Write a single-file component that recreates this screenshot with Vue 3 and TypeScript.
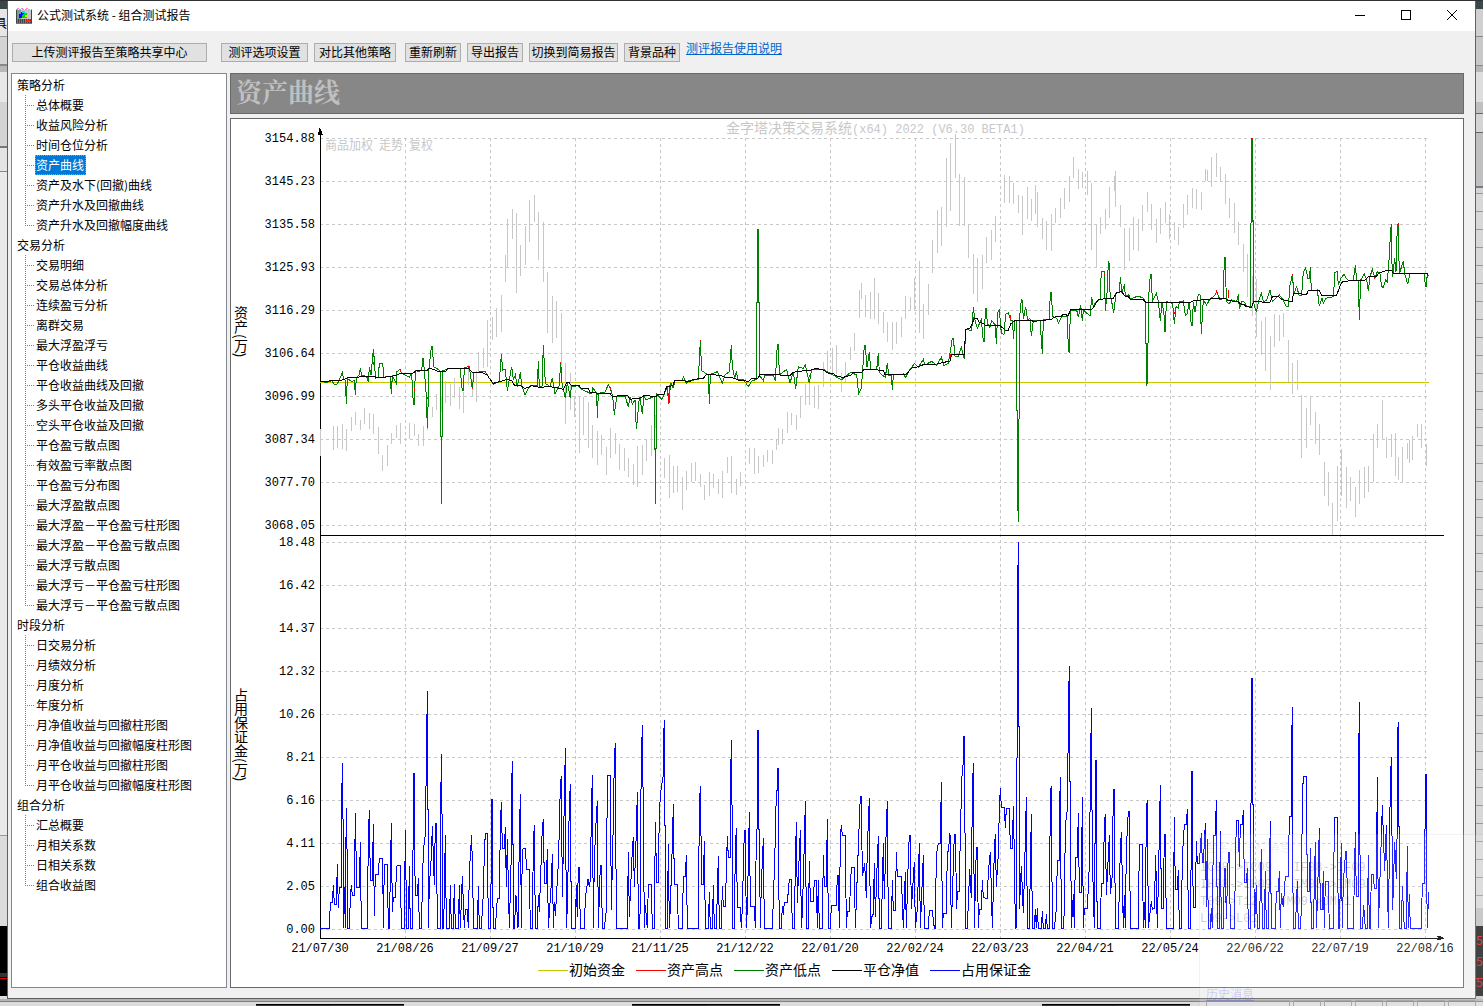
<script setup lang="ts">
interface TreeGroup {
  title: string
  items: string[]
}

interface Segment {
  origin: number
  end: number
  data: string
}

const groups: TreeGroup[] = [
  {
    title: '策略分析',
    items: ['总体概要', '收益风险分析', '时间仓位分析', '资产曲线', '资产及水下(回撤)曲线', '资产升水及回撤曲线', '资产升水及回撤幅度曲线'],
  },
  {
    title: '交易分析',
    items: [
      '交易明细', '交易总体分析', '连续盈亏分析', '离群交易', '最大浮盈浮亏', '平仓收益曲线', '平仓收益曲线及回撤',
      '多头平仓收益及回撤', '空头平仓收益及回撤', '平仓盈亏散点图', '有效盈亏率散点图', '平仓盈亏分布图', '最大浮盈散点图',
      '最大浮盈－平仓盈亏柱形图', '最大浮盈－平仓盈亏散点图', '最大浮亏散点图', '最大浮亏－平仓盈亏柱形图', '最大浮亏－平仓盈亏散点图',
    ],
  },
  {
    title: '时段分析',
    items: ['日交易分析', '月绩效分析', '月度分析', '年度分析', '月净值收益与回撤柱形图', '月净值收益与回撤幅度柱形图', '月平仓收益与回撤柱形图', '月平仓收益与回撤幅度柱形图'],
  },
  {
    title: '组合分析',
    items: ['汇总概要', '月相关系数', '日相关系数', '组合收益图'],
  },
]
const selected = '资产曲线'

const assetTicks = ['3154.88', '3145.23', '3135.58', '3125.93', '3116.29', '3106.64', '3096.99', '3087.34', '3077.70', '3068.05']
const marginTicks = ['18.48', '16.42', '14.37', '12.32', '10.26', '8.21', '6.16', '4.11', '2.05', '0.00']
const dates = [
  '21/07/30', '21/08/26', '21/09/27', '21/10/29', '21/11/25', '21/12/22', '22/01/20',
  '22/02/24', '22/03/23', '22/04/21', '22/05/24', '22/06/22', '22/07/19', '22/08/16',
]
const legend = [
  { label: '初始资金', color: '#c8c800' },
  { label: '资产高点', color: '#ff0000' },
  { label: '资产低点', color: '#008000' },
  { label: '平仓净值', color: '#000000' },
  { label: '占用保证金', color: '#0000ff' },
]

const LEFT = 231
const TOP = 119
const ASSET_TOP = 120
const MARGIN_TOP = 540
const STEP = 3

/* Series are stored in three spans, in units of a third of a chart unit. */
const net: Segment[] = [
  { origin: 230, end: 1230, data: '271,785 295,785 300,780 335,780 350,775 355,772 372,774 395,769 430,769 440,772 460,772 485,769 500,765 512,760 548,760 560,752 590,752 598,745 610,748 620,753 648,753 652,745 715,745 728,757 760,759 772,766 778,775 790,790 815,783 830,778 845,782 853,795 870,797 885,805 900,800 905,797 935,803 950,799 975,802 1000,808 1010,788 1018,788 1024,797 1047,797 1053,804 1075,806 1080,816 1105,820 1140,820 1148,831 1170,826 1193,826 1200,838' },
  { origin: 640, end: 1200, data: '0,834 12,827 48,829 55,822 72,822 80,800 98,797 105,781 150,784 160,778 190,775 200,763 240,766 255,772 280,774 295,780 325,784 335,776 355,774 360,763 450,766 460,757 475,754 510,751 530,745 550,750 565,760 580,761 592,769 610,772 632,766 640,757 665,757 670,750 700,748 730,752 735,764 800,762 815,744 835,740 850,734 890,732 930,723 935,702 973,702 977,628 990,625 1003,596 1012,596 1018,607 1030,610 1036,616 1080,617 1095,630 1105,630 1112,612 1125,602 1170,600 1180,604' },
  { origin: 1040, end: 9999, data: '0,602 35,598 40,592 65,588 68,583 85,586 92,568 155,569 165,555 175,538 220,535 230,518 245,515 255,528 265,530 270,537 310,540 318,547 450,548 460,543 490,539 520,536 555,535 565,542 595,545 602,552 612,554 618,560 635,562 640,545 690,547 697,530 715,530 725,538 745,543 757,543 760,520 800,523 805,510 838,510 845,528 890,526 900,498 908,484 975,480 985,470 1010,468 1018,458 1040,452 1055,452 1060,460 1163,460 1163,466' },
]

const low: Segment[] = [
  { origin: 230, end: 1230, data: '271,785 290,787 305,782 312,792 320,795 328,780 337,757 341,778 346,780 349,851 352,775 365,785 373,782 376,824 379,772 388,765 391,745 395,766 410,769 415,785 418,742 423,765 430,688 434,730 436,775 445,770 448,730 458,730 462,772 480,768 484,821 487,768 499,790 500,755 511,748 514,760 538,772 545,760 550,852 553,852 556,750 565,755 575,750 579,715 583,750 589,830 592,923 595,830 597,745 604,680 607,680 611,740 620,745 631,753 631,950 634,951 634,1151 634,951 637,950 637,753 655,747 690,745 697,812 700,812 703,742 718,740 727,808 732,757 766,755 775,770 790,793 808,785 814,703 818,750 826,748 832,812 845,740 850,780 856,765 862,800 871,757 875,797 885,824 900,797 922,798 925,724 928,800 936,800 940,676 946,790 960,800 967,775 975,822 988,797 992,725 996,790 1006,835 1012,788 1021,835 1024,800 1045,797 1055,808 1070,815 1085,822 1088,803 1100,820 1102,893 1105,820 1125,817 1135,793 1142,808 1148,828 1153,884 1160,830 1185,828 1195,860 1200,830 1207,852 1215,840 1219,926 1222,900 1228,832' },
  { origin: 640, end: 1200, data: '0,834 7,881 12,827 18,840 43,829 43,988 46,990 46,1151 46,985 49,985 50,822 66,838 73,822 82,800 86,853 92,788 99,805 105,783 128,780 130,770 139,790 145,783 175,778 181,662 185,752 205,765 208,851 211,763 232,755 247,790 255,765 268,755 274,676 277,740 284,775 289,757 295,780 310,778 325,800 335,783 349,778 349,550 352,546 352,328 355,328 355,546 358,548 358,766 370,782 375,765 400,765 406,782 412,673 415,673 418,765 440,748 450,788 460,757 467,806 475,740 490,745 496,735 508,790 515,748 550,748 580,765 604,780 632,757 650,765 656,821 664,806 673,677 676,677 681,742 688,697 692,748 710,750 715,700 718,758 736,772 742,730 746,765 754,765 757,809 760,765 790,762 797,772 805,755 824,730 835,742 850,718 855,735 875,724 890,735 904,712 912,737 925,730 937,655 940,655 945,708 955,710 964,682 973,718 977,628 995,632 1000,562 1005,600 1012,625 1024,598 1030,665 1033,665 1036,566 1039,566 1042,610 1050,622 1055,602 1066,615 1069,671 1073,578 1078,570 1084,640 1092,643 1097,582 1105,578 1112,600 1118,600 1120,656 1125,600 1129,602 1129,870 1132,872 1132,1170 1135,1172 1135,1205 1135,898 1138,896 1138,602 1144,538 1147,540 1150,598 1157,560 1163,600 1170,595 1174,647 1180,602' },
  { origin: 1040, end: 9999, data: '0,602 7,701 10,600 28,597 31,517 34,517 38,590 50,595 55,610 65,590 82,588 85,690 88,698 91,570 110,570 115,592 122,555 127,604 130,570 150,588 155,532 160,560 168,545 180,537 184,455 193,455 196,572 202,510 205,424 208,430 210,515 221,580 228,520 238,515 241,472 246,520 253,493 256,528 265,525 270,537 295,528 310,535 316,545 316,670 319,672 319,797 322,790 322,672 325,668 325,545 331,463 334,463 337,545 349,520 355,545 361,604 366,545 373,590 373,634 376,634 379,545 398,550 403,613 408,560 415,565 418,545 430,543 436,587 442,580 448,545 454,616 457,616 460,545 465,575 475,523 480,523 484,641 490,540 500,555 508,540 525,525 530,515 540,540 550,535 553,412 556,412 559,545 567,552 575,540 590,545 595,523 598,566 605,545 612,545 622,560 631,560 631,310 634,308 634,57 637,57 637,303 640,305 640,545 649,577 655,547 664,520 670,545 680,540 690,511 697,545 718,525 730,540 738,559 745,559 750,495 757,465 762,520 770,500 777,525 785,525 790,455 797,445 804,475 808,475 811,442 814,512 832,510 838,559 846,535 850,551 858,535 880,530 885,457 892,455 895,495 903,475 912,463 918,475 925,480 940,480 946,436 950,480 955,480 958,600 962,480 973,462 980,480 985,512 990,470 997,448 1005,475 1012,455 1020,462 1025,500 1030,502 1037,480 1042,485 1049,395 1051,340 1054,313 1054,390 1058,470 1064,415 1068,455 1072,315 1075,311 1075,385 1079,458 1090,424 1094,460 1103,493 1110,460 1153,460 1156,500 1159,500 1162,460 1165,467' },
]

const margin: Segment[] = [
  { origin: 230, end: 1230, data: '271,1165 298,1165 301,1087 307,1087 310,1036 313,1093 319,1093 322,972 325,1103 328,1042 334,1042 334,855 337,670 340,918 341,1165 344,1042 347,1165 347,985 349,804 352,985 353,1165 358,1165 361,1075 364,1036 367,1066 373,1066 376,820 380,1042 388,1042 391,906 394,1165 412,1165 415,890 418,811 421,1021 427,1021 430,853 433,1127 436,1003 445,1003 448,955 458,955 460,1165 463,973 472,973 475,1165 478,1165 484,850 487,1117 490,1073 496,1073 500,980 503,976 511,976 514,1165 523,1165 526,870 530,1165 535,1165 538,979 541,1165 547,1165 547,932 550,930 550,700 553,700 553,885 556,1066 562,1066 565,1015 568,1165 574,1165 580,930 586,885 586,740 589,738 589,525 592,523 592,454 592,808 595,810 595,1165 598,1036 604,950 607,858 613,1036 616,850 619,850 622,1165 631,1165 631,905 634,643 637,905 638,1165 641,1165 646,886 649,1165 658,1165 661,1036 664,1165 670,1165 673,1033 676,1165 685,1165 688,1036 691,1165 697,1008 703,1165 706,1108 712,1108 715,1165 718,995 725,884 728,1025 731,1165 742,1165 745,1039 748,1165 754,1165 760,1060 763,940 766,880 772,880 775,1165 781,1165 784,970 784,778 787,778 787,970 790,1165 796,1165 802,1075 808,1075 811,860 814,787 817,925 823,925 826,861 829,1042 832,897 838,1165 844,940 844,700 847,698 847,664 847,912 850,915 850,1165 853,1165 858,1066 864,1165 868,902 871,763 874,1165 877,928 886,925 890,988 898,988 901,1165 907,1165 910,915 913,855 916,1165 922,1165 925,1066 928,1117 937,862 940,838 943,1030 949,1030 952,928 955,1165 964,1030 967,942 970,1165 973,1087 976,1127 985,970 988,868 991,735 994,709 997,1070 1003,780 1006,625 1009,1165 1012,1100 1018,795 1021,732 1024,1165 1036,1165 1039,1036 1042,1130 1045,982 1048,982 1051,1165 1063,1165 1066,1073 1074,1018 1078,1040 1081,1020 1084,828 1087,706 1090,1165 1093,960 1099,828 1102,784 1105,1165 1111,976 1114,976 1117,1165 1123,1165 1129,1110 1132,706 1141,706 1144,1110 1150,840 1153,655 1156,610 1159,1165 1192,1165 1195,937 1198,1130 1207,928 1210,892 1213,1040 1219,875 1222,757 1225,1165 1228,1165' },
  { origin: 640, end: 1200, data: '1,1100 1,912 4,670 7,556 10,828 13,1165 16,1096 22,1165 25,1034 34,1034 37,1165 43,1165 46,847 50,1027 55,1027 58,811 64,740 70,705 70,610 73,541 73,855 76,857 76,1165 82,1165 85,912 88,1165 91,1100 97,912 100,793 103,1033 112,1033 115,1165 127,1165 130,1009 136,1009 139,946 142,1165 175,1165 178,805 181,739 185,1033 190,1033 193,904 196,1165 205,1165 208,1057 211,1165 217,1165 220,1036 223,1165 229,1165 235,949 238,1165 244,1165 247,1039 250,1099 256,1099 262,888 265,952 271,952 271,778 274,601 277,885 277,1165 283,1165 286,928 289,865 292,1102 301,1102 304,1165 307,1102 313,871 316,871 319,1165 322,1105 328,817 331,1099 343,1099 346,1165 349,868 352,866 352,571 355,571 355,868 358,870 361,1165 364,1033 370,895 373,1165 397,1165 403,993 406,893 409,753 412,750 412,685 415,685 415,900 418,1165 424,1165 427,1099 430,1125 433,1087 442,1087 448,1018 454,1018 457,1165 463,1165 466,978 469,847 472,1088 478,940 481,871 484,1165 487,1117 493,910 496,784 499,1165 505,1165 508,962 511,1084 520,1084 523,1021 529,1021 532,1165 535,1021 538,1165 547,1165 550,946 553,1039 559,1039 562,838 565,1165 571,1165 574,1096 589,1096 592,1006 595,1006 598,1165 601,893 604,856 607,886 616,886 619,1165 622,1115 628,1115 634,982 643,982 646,1165 655,920 658,843 661,769 664,769 667,1009 674,970 679,1073 682,923 688,775 691,1165 697,1123 700,1123 703,970 706,1130 712,957 715,889 718,1165 724,1165 730,910 733,1078 739,855 742,784 745,1165 754,1165 757,1021 760,1111 766,1111 769,937 772,1009 784,1009 790,1165 796,997 799,1165 805,952 808,886 811,886 814,1108 823,967 826,1165 832,1108 838,910 841,1165 850,946 853,1165 865,1165 868,1111 877,1111 883,1165 886,1165 889,946 895,910 901,910 904,727 907,1165 910,1120 919,1120 922,934 925,934 930,880 934,1165 943,883 946,883 950,1108 952,1054 958,1054 961,875 967,676 970,674 970,589 973,589 973,878 976,880 976,1165 982,1165 989,988 994,1075 997,763 1000,670 1003,1165 1009,922 1012,922 1015,1165 1018,1108 1024,1108 1027,1021 1030,1073 1042,1075 1045,993 1051,937 1057,1165 1063,930 1066,883 1069,1040 1075,940 1078,808 1081,745 1084,802 1093,802 1096,863 1099,805 1108,805 1111,925 1117,925 1120,799 1123,942 1126,1165 1129,1163 1129,655 1132,653 1132,76 1135,74 1135,7 1135,558 1138,560 1138,1108 1144,979 1150,1120 1156,900 1159,772 1162,1165 1168,1165 1174,823 1177,1165 1183,1165 1186,1108 1189,1165 1192,1105 1195,1165' },
  { origin: 1040, end: 9999, data: '0,1165 4,1165 7,1114 10,1165 16,1165 19,1123 22,1165 28,1165 31,760 34,739 37,1165 43,1165 49,1108 52,962 58,962 58,838 61,712 64,1165 70,1165 73,1111 76,858 82,808 82,640 85,638 85,424 88,422 88,379 88,724 91,726 94,1165 100,1063 103,1165 106,952 112,952 115,820 118,1057 124,1057 127,772 130,1165 133,1105 142,1105 148,976 151,740 154,505 157,955 163,1165 163,912 166,910 166,661 169,661 169,912 172,1165 181,1165 184,1030 190,1030 193,850 196,823 199,1066 208,886 211,1063 217,1005 220,748 223,748 226,1165 235,1165 241,930 244,877 250,1165 253,1066 256,1165 259,928 265,814 268,814 271,1165 295,1165 298,912 307,912 310,1165 313,1087 316,1165 319,811 322,781 325,1165 334,1084 337,1108 343,1105 347,946 352,1165 358,885 361,736 364,1105 370,1105 373,883 376,883 379,1165 400,1165 403,832 406,1048 412,1048 415,990 418,1165 424,1165 427,950 433,853 439,853 442,808 445,1165 451,1165 454,910 454,694 457,694 457,900 460,1102 466,1102 469,904 472,970 478,970 484,880 487,967 490,967 496,850 499,1100 502,897 505,1165 511,1165 514,1103 517,1165 520,886 526,886 529,781 532,1165 538,1165 541,874 544,1165 550,1165 553,985 556,985 559,1138 565,937 568,937 571,1165 583,1165 586,1000 589,841 595,841 598,980 601,853 607,853 610,811 613,1027 619,1027 622,985 625,1165 631,1165 631,790 634,788 634,415 637,415 637,790 640,795 643,1165 649,1036 652,1165 658,1165 664,928 667,1165 673,1165 676,994 679,1165 685,1165 691,844 694,1165 706,1165 709,1054 715,1054 718,994 721,1165 724,1060 730,1100 736,1009 745,1009 748,829 754,829 754,667 757,502 757,830 760,1165 766,1165 772,1024 775,1165 781,1165 784,1110 787,774 790,710 799,710 802,1054 808,1054 811,925 814,1165 820,1165 826,907 829,1165 832,1087 838,865 841,1108 847,1108 850,994 853,1165 856,1024 865,1024 868,1165 880,1165 883,832 892,832 895,1165 898,1165 904,910 907,1165 910,1027 917,934 920,934 923,1165 940,1165 946,877 949,1070 955,1070 955,778 958,487 961,1165 967,1165 971,1096 976,1165 982,1165 985,946 988,1165 991,1165 994,1003 1000,1003 1003,1045 1009,1045 1012,712 1015,1165 1024,892 1027,796 1034,994 1039,855 1045,1165 1051,733 1054,652 1058,1111 1064,907 1069,1018 1072,840 1072,588 1075,547 1075,858 1078,860 1078,1165 1084,1165 1087,1039 1093,1165 1099,1165 1102,919 1105,1165 1108,1063 1111,1165 1144,1165 1147,1030 1153,1030 1153,868 1156,866 1156,703 1159,703 1159,935 1162,1165 1165,1057 1165,1108' },
]

/* Ranges are x,top,bottom: the background instrument and the intraday highs. */
const backdrop: Segment[] = [
  { origin: 230, end: 1230, data: '271,927,1007 310,918,989 322,918,983 337,912,986 349,927,992 364,891,932 376,876,914 391,900,929 403,864,911 418,879,926 430,881,941 445,921,1001 457,1005,1052 472,975,1037 484,939,971 499,915,953 511,909,971 538,909,956 553,912,947 565,942,977 580,918,977 592,850,929 607,861,890 619,822,870 634,830,875 646,783,848 661,793,857 673,774,833 688,800,866 700,815,878 715,735,794 727,780,830 739,752,845 745,696,755 760,684,745 772,600,740 787,591,661 799,564,650 814,525,635 826,405,486 832,297,440 847,267,356 859,279,518 871,375,467 886,318,434 898,240,365 913,225,305 925,276,419 940,306,485 952,456,638 967,528,668 979,543,653 994,579,735 1006,729,911 1021,759,869 1033,828,892 1048,830,998 1060,830,944 1075,846,983 1087,915,1013 1102,933,1034 1114,945,1004 1129,981,1064 1141,924,1013 1156,939,1001 1168,972,1049 1183,984,1052 1195,1014,1070 1210,1032,1094 1222,978,1100' },
  { origin: 640, end: 1200, data: '7,975,1064 19,957,1022 34,915,1007 46,885,925 73,1014,1073 88,1005,1133 100,1038,1118 112,1038,1115 127,1071,1169 139,1053,1109 154,1029,1085 166,1026,1082 181,1062,1100 193,1095,1139 208,1056,1127 220,1062,1103 235,1077,1121 247,1053,1133 262,1011,1058 274,1008,1118 289,1077,1124 301,1056,1097 328,984,1031 343,984,1061 355,1008,1058 370,1005,1040 382,990,1025 397,990,1031 409,957,990 415,924,974 427,927,971 442,876,938 454,879,914 469,885,929 481,830,893 496,792,854 508,790,854 523,798,863 535,795,866 550,726,800 562,693,760 577,684,760 589,675,763 604,760,815 616,726,785 631,681,720 643,639,692 658,510,593 664,489,536 676,525,590 691,516,596 703,474,596 715,519,611 730,576,638 742,606,665 757,606,689 769,606,671 784,591,650 796,528,596 811,531,570 823,474,572 838,423,638 850,552,656 865,492,584 877,360,458 892,270,398 904,261,377 919,114,320 931,69,272 946,42,173 958,162,317 973,171,317 985,312,413 1000,402,521 1012,414,545 1027,405,506 1039,351,428 1054,330,419 1066,288,365 1093,165,248 1108,168,248 1120,189,251 1135,225,278 1147,228,344 1162,201,296 1174,237,302 1186,195,281 1192,216,320' },
  { origin: 1040, end: 9999, data: '7,294,356 19,303,389 34,282,392 46,264,308 61,234,293 73,204,266 88,168,245 100,111,173 115,147,206 127,156,203 142,153,224 154,189,389 169,312,443 181,291,341 196,267,326 208,201,293 223,168,212 226,153,261 241,255,320 253,324,449 268,324,422 280,291,389 295,297,392 307,255,332 322,216,275 334,252,329 349,297,368 361,264,341 376,246,308 388,282,356 403,306,359 415,321,374 430,252,323 442,225,284 457,204,263 469,207,266 484,216,269 496,147,184 502,150,184 514,111,200 529,99,170 541,141,185 556,162,251 568,234,293 583,249,338 595,306,374 610,372,455 622,402,530 637,468,587 649,477,650 664,603,704 676,591,752 691,648,809 703,582,680 718,585,662 730,579,650 745,660,785 757,729,821 772,720,809 784,825,1013 799,864,983 811,828,914 826,876,973 838,912,1004 853,1026,1127 865,1056,1157 877,1149,1246 892,1038,1202 904,987,1127 919,1041,1163 931,1071,1142 946,1101,1190 958,1050,1151 973,1041,1133 985,1038,1115 1000,942,1085 1012,912,983 1027,840,958 1039,951,1013 1054,942,1010 1066,939,1067 1075,1011,1079 1087,981,1087 1102,969,1016 1108,960,1028 1117,948,1019 1132,912,950 1144,912,983 1159,972,1037' },
]

const high: Segment[] = [
  { origin: 230, end: 1230, data: '430,688,697 430,725,735 418,742,750 511,748,752 715,738,744 814,703,708 940,676,684 992,725,732 553,800,815 592,830,838 727,800,806 1141,800,806 1102,820,826' },
  { origin: 640, end: 1200, data: '85,820,853 88,796,850 181,660,667 274,676,682 274,712,720 130,768,775 413,672,677 508,766,772 1000,590,598 1078,568,574 1112,585,597 1132,870,874 930,703,718' },
  { origin: 1040, end: 9999, data: '634,54,58 637,54,58 640,300,306 88,674,680 193,460,466 565,510,535 529,510,518 757,462,468 797,442,448 1075,308,314 1090,424,432 403,575,583 220,570,576 1003,465,478 803,470,478 454,608,616 268,525,537' },
]

function points(segments: Segment[]): number[][] {
  return segments.flatMap((s) =>
    s.data
      .split(' ')
      .map((p) => p.split(',').map(Number))
      .filter(([x]) => x < s.end)
      .map(([x, ...ys]) => [(s.origin - LEFT) * STEP + x, ...ys]),
  )
}

function toLine(segments: Segment[], top: number): string {
  return points(segments).map(([x, y]) => `${x},${(top - TOP) * STEP + y}`).join(' ')
}

function toBars(segments: Segment[], top: number): string {
  const shift = (top - TOP) * STEP
  return points(segments).map(([x, a, b]) => `M${x} ${shift + a}V${shift + b}`).join('')
}

const netPoints = toLine(net, ASSET_TOP)
const lowPoints = toLine(low, ASSET_TOP)
const marginPoints = toLine(margin, MARGIN_TOP)
const backdropPath = toBars(backdrop, ASSET_TOP)
const highPath = toBars(high, ASSET_TOP)
</script>

<template>
  <div class="desktop">
    <div class="middle">
      <div class="edge edge-left"><span>具</span></div>
      <main class="window">
        <header class="titlebar">
          <svg class="app-icon" width="16" height="16" viewBox="0 0 16 16" shape-rendering="crispEdges" aria-hidden="true">
            <path d="M0 1h16M1 0h2M5 0h3M10 0h2" stroke="#ff7df0" stroke-dasharray="2 1" />
            <rect y="2" width="16" height="13" fill="#444" />
            <rect x="1" y="2" width="14" height="9" fill="#c8c8c8" />
            <rect x="1" y="2" width="4" height="9" fill="#7b9a9a" />
            <path d="M5 4h4v6H3V6h2z" fill="#0010ff" />
            <path d="M8 5h3v5H6V8z" fill="#00d800" />
            <path d="M6 3h3v2H6z" fill="#00dcff" />
            <path d="M9 7h2v2H9z" fill="#f8f000" />
            <path d="M1 12h14M1 14h14" stroke="#ff20d0" stroke-width="2" stroke-dasharray="1 1" />
            <path d="M10 12h5v2h-5z" fill="#ff2020" />
            <path d="M0 15h16" stroke="#777" />
          </svg>
          <h1>公式测试系统 - 组合测试报告</h1>
          <div class="controls">
            <button type="button" aria-label="最小化">
              <svg width="12" height="12" viewBox="0 0 12 12" shape-rendering="crispEdges"><rect x="1" y="6" width="10" height="1" /></svg>
            </button>
            <button type="button" aria-label="最大化">
              <svg width="12" height="12" viewBox="0 0 12 12" shape-rendering="crispEdges"><path fill-rule="evenodd" d="M1 1h10v10H1zM2 2v8h8V2z" /></svg>
            </button>
            <button type="button" aria-label="关闭">
              <svg width="12" height="12" viewBox="0 0 12 12"><path d="M1 1l10 10M11 1L1 11" stroke="#000" /></svg>
            </button>
          </div>
        </header>

        <nav class="toolbar" aria-label="工具栏">
          <button type="button" class="upload">上传测评报告至策略共享中心</button>
          <button type="button" class="wide">测评选项设置</button>
          <button type="button" class="medium">对比其他策略</button>
          <button type="button" class="small first">重新刷新</button>
          <button type="button" class="small">导出报告</button>
          <button type="button" class="wide">切换到简易报告</button>
          <button type="button" class="small">背景品种</button>
          <a href="#help">测评报告使用说明</a>
        </nav>

        <div class="content">
          <aside class="tree">
            <section v-for="g in groups" :key="g.title">
              <h2>{{ g.title }}</h2>
              <ul>
                <li v-for="item in g.items" :key="item">
                  <a :href="'#' + item" :class="{ selected: item === selected }">{{ item }}</a>
                </li>
              </ul>
            </section>
          </aside>

          <div class="report">
            <h2 class="heading">资产曲线</h2>
            <div class="panel">
              <svg class="chart" viewBox="231 119 1232 868" role="img" aria-label="资产曲线">
                <g class="lines">
                  <g class="grid">
                    <line v-for="(_, i) in assetTicks" :key="'a' + i" x1="320" x2="1427" :y1="138 + i * 43" :y2="138 + i * 43" />
                    <line v-for="(_, i) in marginTicks" :key="'m' + i" x1="320" x2="1427" :y1="542 + i * 43" :y2="542 + i * 43" />
                    <line v-for="i in 13" :key="'v' + i" :x1="320 + i * 85" :x2="320 + i * 85" y1="138" y2="938" />
                  </g>
                  <path d="M320 938V130M320 535H1444M320 938H1444" stroke="#000" />
                  <path d="M320 127l1 3 2 5h-5l1-5z M1444 938l-4 -2h-4l2 2l-2 2h4z" fill="#000" />
                  <path d="M320 382H1429" stroke="#c8c800" />
                  <svg x="231" y="119" width="1232" height="868" viewBox="0 0 3696 2604" stroke-width="3">
                    <path :d="backdropPath" stroke="#c8c8c8" />
                    <polyline :points="lowPoints" stroke="#008000" />
                    <path :d="highPath" stroke="#ff0000" />
                    <polyline :points="netPoints" stroke="#000" />
                    <polyline :points="marginPoints" stroke="#0000ff" />
                  </svg>
                </g>

                <g class="ticks" text-anchor="end">
                  <text v-for="(t, i) in assetTicks" :key="t" x="315" :y="142 + i * 43">{{ t }}</text>
                  <text v-for="(t, i) in marginTicks" :key="t" x="315" :y="546 + i * 43">{{ t }}</text>
                </g>
                <g class="ticks" text-anchor="middle">
                  <text v-for="(d, i) in dates" :key="d" :x="320 + i * 85" y="952">{{ d }}</text>
                </g>

                <text class="watermark" x="726" y="133">金字塔决策交易系统<tspan class="latin">(x64) 2022 (V6.30 BETA1)</tspan></text>
                <text class="instrument" x="325" y="150">商品加权<tspan x="379">走势</tspan><tspan x="409">复权</tspan></text>

                <text class="vertical" x="241" y="306">资产(万)</text>
                <text class="vertical" x="241" y="688">占用保证金(万)</text>

                <g v-for="(l, i) in legend" :key="l.label" class="legend">
                  <line :x1="538 + i * 98" :x2="568 + i * 98" y1="970" y2="970" :stroke="l.color" />
                  <text :x="569 + i * 98" y="975">{{ l.label }}</text>
                </g>
              </svg>
            </div>
          </div>
        </div>
      </main>
      <div class="edge edge-right"><span>5</span><span>5</span><span>5</span></div>
    </div>
    <footer class="statusbar">
      <i class="meter"></i><i class="meter"></i><i class="meter"></i>
      <i class="cell wide-cell"></i><i class="cell"></i><i class="cell"></i><i class="cell"></i><i class="cell"></i><i class="cell"></i><i class="cell"></i>
    </footer>

    <div class="toast">
      <strong>金字塔 除权消息</strong>
      <pre>IC08-&gt;IC09   IF08-&gt;IF09
IH08-&gt;IH09   IM08-&gt;IM09
T09-&gt;T12   JM09-&gt;JM01
L09-&gt;L01</pre>
      <a href="#history">历史消息</a>
    </div>
  </div>
</template>

<style>
body {
  margin: 0;
}
</style>

<style scoped>
.desktop {
  position: relative;
  display: flex;
  flex-direction: column;
  min-height: 100vh;
  overflow: hidden;
  box-sizing: border-box;
  border-top: 1px solid #303234;
  background: #dcdcdc;
  color: #000;
  font: 12px/20px "Noto Sans CJK SC", sans-serif;
}

.middle {
  display: flex;
  flex: 1;
}

.edge {
  width: 7px;
  flex: none;
  overflow: hidden;
  font-size: 12px;
}

.edge-left {
  box-sizing: border-box;
  padding-top: 12px;
  background:
    linear-gradient(#3b464b 8px, #e6e6e6 8px 35px, #999 35px 36px, #d4d4d4 36px 63px, #888 63px 65px, #b8b8b8 65px 71px, #e8e8e8 71px 101px, #d4d4d4 101px 145px, #777 145px 147px, #e4e4e4 147px 170px, #888 170px 171px, #eaeaea 171px 834px, #999 834px 835px, #dcdcdc 835px 925px, #000 925px 972px, #333 972px 976px, #000 976px 977px, #d00 977px 978px, #000 978px 995px, #ddd 995px);
}

.edge-left span {
  display: block;
  margin-left: -5px;
}

.edge-right {
  display: flex;
  flex-direction: column;
  gap: 1px;
  box-sizing: border-box;
  padding-top: 929px;
  background:
    linear-gradient(#3b464b 8px, transparent 8px 925px, #222 925px 977px, #d02020 977px 978px, #222 978px 995px, #ccc 995px),
    linear-gradient(#d0d0d0 35px, #888 35px 36px, #c8c8c8 36px 64px, #888 64px 65px, #b8b8b8 65px 71px, #dedede 71px 101px, #c0c0c0 101px 112px, #666 112px 113px, #d4d4d4 113px 131px, #666 131px 132px, #c0c0c0 132px 185px, #778 185px 187px, #d4d4d4 187px 192px, transparent 192px 907px, #c0c0c0 907px),
    repeating-linear-gradient(#d8d8d8 0 12px, #999 12px 13px, #d8d8d8 13px 18px);
  color: #e02020;
}

.window {
  display: flex;
  flex: 1;
  flex-direction: column;
  min-width: 0;
  border: 1px solid #606060;
  border-top: 0;
  background: #f0f0f0;
}

.titlebar {
  display: flex;
  align-items: center;
  height: 30px;
  padding-left: 8px;
  background: #fff;
}

.titlebar h1 {
  flex: 1;
  margin: 0 0 2px 5px;
  font-size: 12px;
  font-weight: 400;
}

.controls {
  display: flex;
}

.controls button {
  display: grid;
  place-items: center;
  width: 46px;
  height: 30px;
  padding: 0 0 2px;
  border: 0;
  background: none;
}

.toolbar {
  display: flex;
  align-items: flex-start;
  gap: 6px;
  height: 30px;
  padding: 12px 4px 0;
}

.toolbar button {
  height: 19px;
  padding: 0 0 1px;
  border: 1px solid #adadad;
  background: #e1e1e1;
  color: #000;
  font: inherit;
  line-height: 16px;
  white-space: nowrap;
}

.toolbar .upload {
  width: 195px;
  margin-right: 8px;
}

.toolbar .wide {
  width: 87px;
}

.toolbar .medium {
  width: 82px;
}

.toolbar .small {
  width: 56px;
}

.toolbar .first {
  margin-left: 3px;
}

.toolbar .wide:nth-of-type(6) {
  width: 89px;
}

.toolbar a {
  color: #0066cc;
  line-height: 10px;
}

.content {
  display: flex;
  flex: 1;
  gap: 3px;
  padding: 0 11px 10px 3px;
}

.tree {
  width: 214px;
  flex: none;
  padding-top: 1px;
  border: 1px solid #828790;
  background: #fff;
}

.tree h2 {
  margin: 0 0 0 5px;
  font-size: 12px;
  font-weight: 400;
  line-height: 20px;
}

.tree ul {
  margin: 0 0 0 5px;
  padding: 0;
  list-style: none;
}

.tree li {
  display: flex;
  height: 20px;
  padding-left: 18px;
  background:
    repeating-linear-gradient(#808080 0 1px, transparent 1px 2px) 8px 0 / 1px 20px no-repeat,
    repeating-linear-gradient(to right, #808080 0 1px, transparent 1px 2px) 8px 10px / 9px 1px no-repeat;
}

.tree li:last-child {
  background-size: 1px 10px, 9px 1px;
}

.tree a {
  padding: 0 2px 0 1px;
  color: #000;
  text-decoration: none;
  white-space: nowrap;
}

.tree .selected {
  background: #0078d7;
  color: #fff;
  outline: 1px dotted #ff8728;
  outline-offset: -1px;
}

.report {
  display: flex;
  flex: 1;
  flex-direction: column;
  gap: 4px;
  min-width: 0;
}

.heading {
  box-sizing: border-box;
  height: 41px;
  margin: 0;
  padding-left: 5px;
  border: 1px solid #696969;
  background: #878787;
  color: #c0c0c0;
  font: 700 26px/34px "Noto Serif CJK SC", "Noto Sans CJK SC", serif;
}

.panel {
  flex: 1;
  border: 1px solid #696969;
  background: #fff;
}

.chart {
  display: block;
  width: 100%;
  height: auto;
  overflow: visible;
}

.lines {
  fill: none;
  shape-rendering: crispEdges;
}

.grid {
  stroke: #c8c8c8;
  stroke-dasharray: 3 3;
}

.ticks,
.latin {
  font: 12px "Liberation Mono", monospace;
}

.watermark {
  fill: #c8c8c8;
  font-size: 14px;
  white-space: pre;
}

.instrument {
  fill: #c8c8c8;
  font-size: 12px;
}

.vertical {
  font-size: 14px;
  writing-mode: vertical-rl;
}

.legend {
  font-size: 14px;
  shape-rendering: crispEdges;
}

.statusbar {
  display: flex;
  align-items: flex-end;
  height: 7px;
  padding-left: 256px;
  background: linear-gradient(#b4b4b4 2px, #808080 2px 3px, #dcdcdc 3px);
}

.meter {
  width: 148px;
  height: 1px;
  margin-right: 228px;
  border-top: 1px solid #000;
  background: linear-gradient(to right, #c00000 50%, #206010 50%);
}

.meter:nth-child(2) {
  margin-right: 262px;
}

.meter:nth-child(3) {
  margin-right: 16px;
}

.cell {
  width: 26px;
  height: 5px;
  margin-right: 3px;
  border: 1px solid #999;
  border-bottom: 0;
}

.wide-cell {
  width: 82px;
}

.toast {
  position: absolute;
  right: 0;
  bottom: 0;
  box-sizing: border-box;
  width: 284px;
  height: 172px;
  overflow: hidden;
  border-top: 1px solid rgba(0, 0, 0, 0.05);
  border-left: 1px solid rgba(0, 0, 0, 0.05);
  background: rgba(255, 255, 255, 0.15);
  color: rgba(0, 0, 0, 0.2);
  pointer-events: none;
}

.toast strong {
  display: block;
  padding: 2px 0 3px 5px;
  color: rgba(0, 0, 0, 0.08);
  font-size: 12px;
  font-weight: 400;
}

.toast pre {
  margin: 0 0 56px;
  font: 12px/17px "Liberation Mono", monospace;
}

.toast a {
  margin-left: 6px;
  color: rgba(0, 0, 255, 0.18);
}
</style>
